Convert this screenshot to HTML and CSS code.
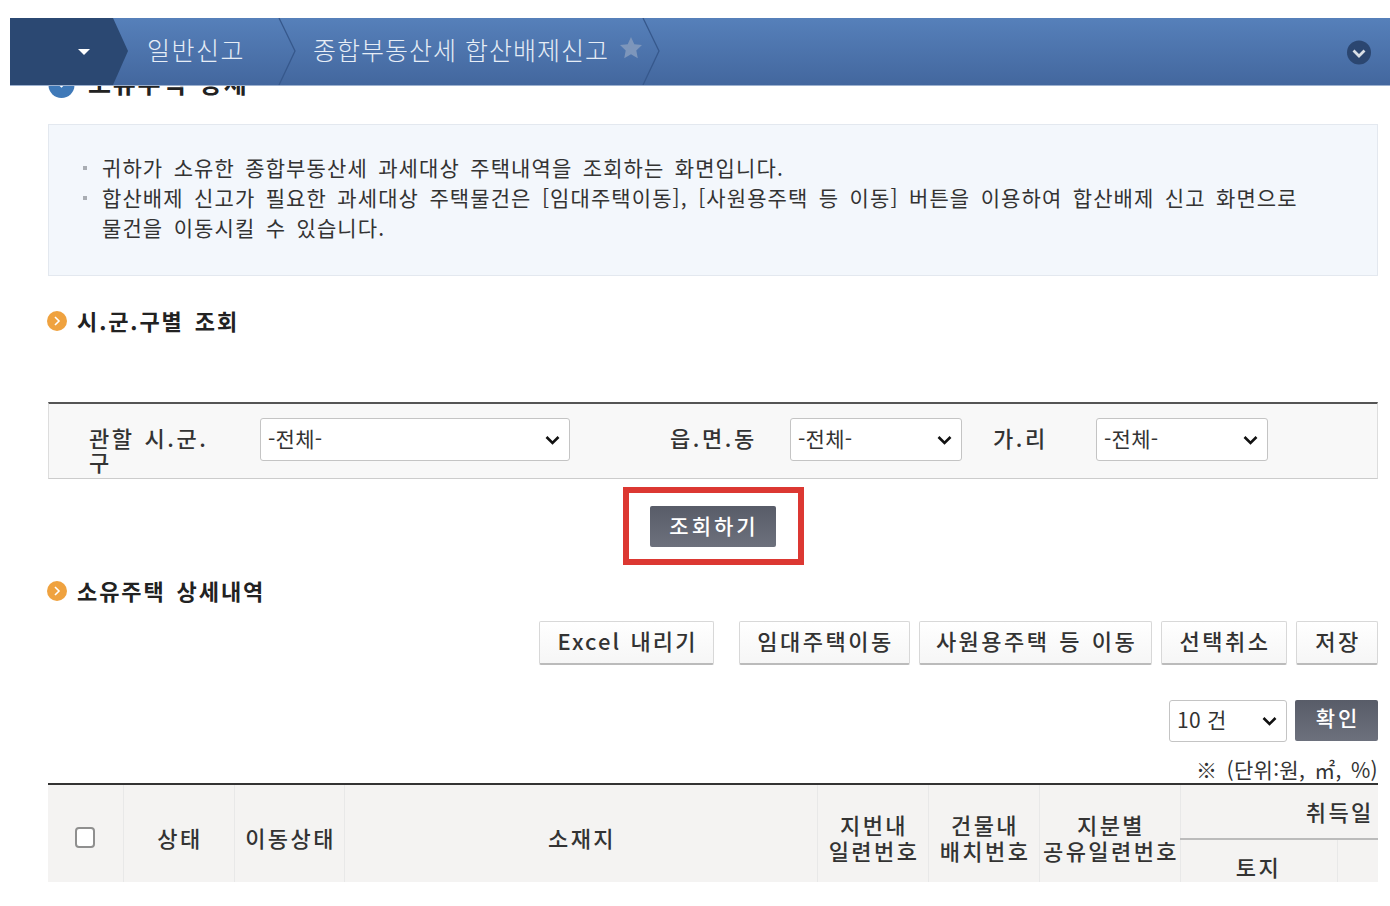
FILE: index.html
```html
<!DOCTYPE html>
<html lang="ko">
<head>
<meta charset="utf-8">
<title>종합부동산세 합산배제신고</title>
<link rel="stylesheet" href="styles.css">
</head>
<body>
<header class="topbar">
  <div class="home"><span class="caret"></span></div>
  <svg class="tip" width="17" height="67" viewBox="0 0 17 67"><polygon points="0,0 2,0 17,33 2,67 0,67" fill="#2b4872"/></svg>
  <div class="crumb crumb-a">일반신고</div>
  <svg class="sep" width="18" height="67" viewBox="0 0 18 67"><path d="M1 0 L17 33 L1 67" fill="none" stroke="#36588c" stroke-width="1.3"/></svg>
  <div class="crumb crumb-b">종합부동산세 합산배제신고
    <svg class="star" width="24" height="24" viewBox="0 0 24 24"><path d="M12 1l3.3 7.2 7.7.9-5.7 5.3 1.5 7.8L12 18.300 5.200 22.200l1.500-7.800L1 9.100l7.700-.9z" fill="#7d96bb"/></svg>
  </div>
  <svg class="sep" width="18" height="67" viewBox="0 0 18 67"><path d="M1 0 L17 33 L1 67" fill="none" stroke="#36588c" stroke-width="1.300"/></svg>
  <div class="toggle">
    <svg width="24" height="25" viewBox="0 0 24 25"><circle cx="12" cy="12.500" r="12" fill="#2b4670"/><path d="M6.500 10.500 L12 16 L17.500 10.500" fill="none" stroke="#d9dfe6" stroke-width="2.800"/></svg>
  </div>
</header>

<main class="page">
  <h2 class="title title-first">
    <svg class="bullet" width="27" height="26" viewBox="0 0 27 26"><circle cx="13.500" cy="13" r="13" fill="#3f79b8"/><path d="M10 11l3.500 3.500L17 11" fill="none" stroke="#fff" stroke-width="1.800"/></svg>
    소유주택 상세
  </h2>

  <section class="info">
    <p class="info-line">귀하가 소유한 종합부동산세 과세대상 주택내역을 조회하는 화면입니다.</p>
    <p class="info-line">합산배제 신고가 필요한 과세대상 주택물건은 [임대주택이동], [사원용주택 등 이동] 버튼을 이용하여 합산배제 신고 화면으로 물건을 이동시킬 수 있습니다.</p>
  </section>

  <h2 class="title title-search">
    <svg class="bullet-small" width="20" height="20" viewBox="0 0 20 20"><circle cx="10" cy="10" r="10" fill="#efa23f"/><path d="M8 6l4 4-4 4" fill="none" stroke="#fff" stroke-width="1.600"/></svg>
    시.군.구별 조회
  </h2>

  <form class="search">
    <label class="label label-city">관할 시.군.구</label>
    <select class="select select-city"><option>-전체-</option></select>
    <label class="label label-town">읍.면.동</label>
    <select class="select select-town"><option>-전체-</option></select>
    <label class="label label-ri">가.리</label>
    <select class="select select-town"><option>-전체-</option></select>
  </form>

  <div class="highlight"><button class="btn-dark btn-query" type="button">조회하기</button></div>

  <h2 class="title title-detail">
    <svg class="bullet-small" width="20" height="20" viewBox="0 0 20 20"><circle cx="10" cy="10" r="10" fill="#efa23f"/><path d="M8 6l4 4-4 4" fill="none" stroke="#fff" stroke-width="1.600"/></svg>
    소유주택 상세내역
  </h2>

  <div class="actions">
    <button class="btn-light w-excel" type="button">Excel 내리기</button>
    <button class="btn-light w-rent" type="button">임대주택이동</button>
    <button class="btn-light w-staff" type="button">사원용주택 등 이동</button>
    <button class="btn-light w-cancel" type="button">선택취소</button>
    <button class="btn-light w-save" type="button">저장</button>
  </div>

  <div class="pager">
    <select class="select select-count"><option>10 건</option></select>
    <button class="btn-dark btn-ok" type="button">확인</button>
  </div>

  <p class="unit">※ (단위:원, ㎡, %)</p>

  <div class="table-wrap">
    <table class="grid">
      <colgroup>
        <col class="c1"><col class="c2"><col class="c3"><col class="c4"><col class="c5"><col class="c6"><col class="c7"><col class="c8"><col class="c9">
      </colgroup>
      <thead>
        <tr>
          <th rowspan="2"><input class="check" type="checkbox"></th>
          <th rowspan="2">상태</th>
          <th rowspan="2">이동상태</th>
          <th rowspan="2">소재지</th>
          <th rowspan="2">지번내<br>일련번호</th>
          <th rowspan="2">건물내<br>배치번호</th>
          <th rowspan="2">지분별<br>공유일련번호</th>
          <th colspan="2" class="group">취득일</th>
        </tr>
        <tr>
          <th class="sub">토지</th>
          <th class="sub"></th>
        </tr>
      </thead>
    </table>
  </div>
</main>
</body>
</html>
```

FILE: styles.css
```css
* { box-sizing: border-box; }
html, body { margin: 0; background: #fff; }
body {
  font-family: "Noto Sans CJK KR", "Noto Sans", sans-serif;
  color: #333;
  height: 906px;
  overflow: hidden;
  position: relative;
}
p, h2 { margin: 0; }

.topbar {
  position: absolute;
  top: 18px;
  left: 10px;
  right: 0;
  height: 68px;
  display: flex;
  align-items: flex-start;
  background: linear-gradient(#5680ba, #43679e);
  border-bottom: 1px solid #9db1cf;
  z-index: 2;
  color: #e6edf6;
  font-size: 25px;
  line-height: 63px;
  font-weight: 300;
  letter-spacing: 1px;
  white-space: nowrap;
}
.topbar svg { display: block; flex: none; }
.home {
  width: 101px;
  height: 67px;
  background: #2b4872;
  display: flex;
  align-items: center;
  padding-left: 68px;
}
.caret {
  width: 0;
  height: 0;
  border-left: 6px solid transparent;
  border-right: 6px solid transparent;
  border-top: 6px solid #fff;
}
.crumb { height: 67px; }
.crumb-a { margin-left: 19px; width: 131px; letter-spacing: 1.500px; }
.crumb-b { margin-left: 17px; width: 329px; position: relative; }
.star { position: absolute; left: 306px; top: 18px; }
.toggle { margin-left: auto; margin-right: 19px; padding-top: 22px; }

.page {
  height: 882px;
  padding: 72px 12px 0 48px;
  overflow: hidden;
}
.title {
  display: flex;
  align-items: flex-start;
  height: 24px;
  font-size: 22px;
  line-height: 20px;
  font-weight: 700;
  color: #222;
  letter-spacing: 1.900px;
  word-spacing: 3px;
}
.title-first { height: 26px; gap: 13px; font-size: 25px; line-height: 21px; letter-spacing: 1.800px; }
.title-search { margin: 34px 0 0 -1px; gap: 10px; }
.title-detail { margin: 15px 0 0 -1px; gap: 10px; }
.bullet-small { flex: none; margin-top: 1px; }
.bullet { flex: none; }

.info {
  margin-top: 26px;
  height: 152px;
  padding: 27px 60px 0 53px;
  background: #f3f7fc;
  border: 1px solid #e3e8ef;
  font-size: 21px;
  line-height: 30px;
  letter-spacing: 1.100px;
  word-spacing: 3.400px;
  color: #333;
}
.info-line { position: relative; }
.info-line::before {
  content: "";
  position: absolute;
  left: -19px;
  top: 14px;
  width: 4px;
  height: 4px;
  background: #a9adb3;
}

.search {
  margin-top: 68px;
  height: 77px;
  display: flex;
  align-items: flex-start;
  padding-top: 14px;
  background: #f8f8f8;
  border-top: 2px solid #555;
  border-bottom: 1px solid #ccc;
  border-left: 1px solid #ddd;
  border-right: 1px solid #ddd;
}
.label {
  font-size: 22px;
  line-height: 24px;
  font-weight: 500;
  color: #333;
  letter-spacing: 2.600px;
  word-spacing: 1px;
  margin-top: 7px;
}
.label-city { width: 125px; margin-left: 40px; margin-right: 46px; }
.label-town { margin-left: 100px; width: 120px; }
.label-ri { margin-left: 31px; width: 103px; }
.select {
  appearance: none;
  height: 43px;
  background: #fff url("data:image/svg+xml,%3Csvg xmlns='http://www.w3.org/2000/svg' width='15' height='10' viewBox='0 0 15 10'%3E%3Cpath d='M1.500 2l6 6 6-6' fill='none' stroke='%23111' stroke-width='2.600'/%3E%3C/svg%3E") no-repeat right 9px center;
  border: 1px solid #c4c4c4;
  border-radius: 3px;
  font-family: inherit;
  font-size: 21px;
  letter-spacing: .3px;
  color: #333;
  padding: 0 3px 4px 7px;
}
.select-city { width: 310px; }
.select-town { width: 172px; }
.select-count { width: 118px; height: 42px; padding: 0 4px 5px 7px; }

.highlight {
  width: 181px;
  height: 78px;
  margin: 8px auto 0;
  border: 6px solid #dc3832;
  display: flex;
  align-items: center;
  justify-content: center;
}
.btn-dark {
  border: 0;
  border-radius: 2px;
  background: linear-gradient(#585c68, #6d717d);
  color: #fff;
  font-family: inherit;
  font-size: 21px;
  font-weight: 500;
  letter-spacing: 3px;
  padding: 0 0 2px 2px;
}
.btn-query { width: 126px; height: 41px; }
.btn-ok { width: 83px; height: 41px; padding: 0 0 7px 3px; }

.actions {
  margin-top: 17px;
  display: flex;
  justify-content: flex-end;
  gap: 9px;
}
.btn-light {
  height: 44px;
  border: 1px solid #d8d8d8;
  border-bottom: 2px solid #bbb;
  border-radius: 2px;
  background: linear-gradient(#fff, #f6f6f6);
  color: #333;
  font-family: inherit;
  font-size: 22px;
  font-weight: 500;
  letter-spacing: 2.500px;
  word-spacing: 1px;
  padding: 0 0 6px 2px;
}
.w-excel { width: 175px; margin-right: 16px; letter-spacing: 2.100px; }
.w-rent { width: 171px; }
.w-staff { width: 233px; }
.w-cancel { width: 126px; }
.w-save { width: 82px; }

.pager {
  margin-top: 35px;
  display: flex;
  justify-content: flex-end;
  gap: 8px;
  align-items: flex-start;
}
.unit {
  margin-top: 15px;
  height: 25px;
  line-height: 24px;
  text-align: right;
  font-size: 21px;
  letter-spacing: .3px;
  word-spacing: 3px;
}

.table-wrap {
  margin-top: 1px;
  border-top: 2px solid #333;
  overflow: hidden;
}
.grid {
  width: 1448px;
  table-layout: fixed;
  border-collapse: collapse;
}
.c1 { width: 75px; }
.c2 { width: 111px; }
.c3 { width: 110px; }
.c4 { width: 473px; }
.c5, .c6 { width: 111px; }
.c7 { width: 141px; }
.c8 { width: 157px; }
.c9 { width: 159px; }
.grid th {
  height: 54px;
  padding: 0 0 4px 3px;
  background: #f4f3f2;
  border-left: 1px solid #e8e8e8;
  font-size: 22px;
  line-height: 26px;
  font-weight: 500;
  color: #333;
  letter-spacing: 2.400px;
  text-align: center;
}
.grid th:first-child { border-left: 0; padding-left: 0; }
.grid .group { border-bottom: 2px solid #bbb; padding-bottom: 2px; }
.grid .sub { padding-bottom: 2px; }
.grid tr:last-child .sub:first-child { border-left: 1px solid #e8e8e8; }
.check {
  appearance: none;
  display: block;
  margin: 0 auto 0 27px;
  width: 20px;
  height: 21px;
  background: #fff;
  border: 2px solid #8f8f8f;
  border-radius: 4px;
}
```
